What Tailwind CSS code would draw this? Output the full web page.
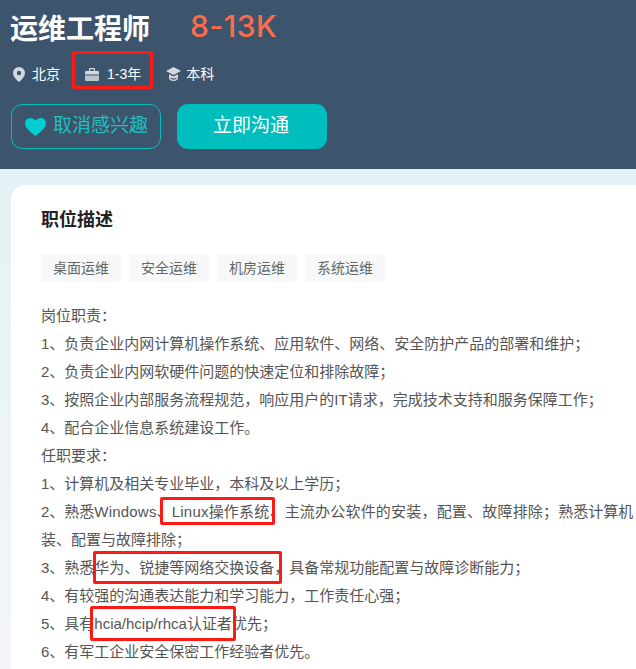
<!DOCTYPE html>
<html lang="zh-CN">
<head>
  <meta charset="UTF-8">
  <title>运维工程师</title>
  <script src="https://cdn.jsdelivr.net/npm/@tailwindcss/browser@4"></script>
</head>
<body class="relative h-[669px] overflow-hidden bg-white font-['Liberation_Sans','Noto_Sans_CJK_SC',sans-serif]">

  <!-- header -->
  <div class="h-[169px] bg-[#3c556d] pl-[11px] pt-[8px]">
    <div class="flex h-[44px] items-center">
      <h1 class="-ml-[1px] w-[180px] text-[28px] font-bold text-white">运维工程师</h1>
      <span class="-mt-[8px] font-['Inter'] text-[30px] font-medium tracking-[0.5px] text-[#fc6c4c]">8-13K</span>
    </div>
    <div class="mt-[2px] flex h-[40px] items-center pl-[2px] text-[14px] text-white">
      <svg class="h-[15px] w-[12px]" viewBox="0 0 12 15" fill="#d3d9df"><path fill-rule="evenodd" d="M6 0a6 6 0 0 1 6 6c0 3.500-3.500 7-6 9-2.500-2-6-5.500-6-9a6 6 0 0 1 6-6zm0 3.800a2.200 2.200 0 1 0 0 4.400 2.200 2.200 0 0 0 0-4.400z"/></svg>
      <span class="ml-[7px]">北京</span>
      <svg class="ml-[25px] h-[13px] w-[14px]" viewBox="0 0 14 13" fill="#d3d9df"><path fill-rule="evenodd" d="M4 3V1.200C4 .5 4.500 0 5.200 0h3.600C9.500 0 10 .5 10 1.200V3H5.200V1.200h3.600V3H4z"/><path d="M1.200 3h11.600c.7 0 1.200.5 1.200 1.200V6.500H0V4.200C0 3.500.5 3 1.200 3z"/><path opacity=".85" d="M0 7.500h14v4.300c0 .7-.5 1.200-1.200 1.200H1.200C.5 13 0 12.500 0 11.800z"/></svg>
      <span class="ml-[8px]">1-3年</span>
      <svg class="ml-[25px] h-[14px] w-[15px]" viewBox="0 0 15 14" fill="#d3d9df"><path d="M7.500 0 15 4 7.500 8 0 4z"/><path fill-rule="evenodd" d="M3 7.200 7.500 9.500 12 7.200V11c0 1.700-2 3-4.500 3S3 12.700 3 11V7.200zm1.200 3.300c0 1 1.400 2.200 3.300 2.200s3.300-1.200 3.300-2.200c-1 .6-2.100.9-3.300.9s-2.300-.3-3.300-.9z"/></svg>
      <span class="ml-[5px]">本科</span>
    </div>
    <div class="mt-[10px] flex gap-[16px] text-[19px]">
      <button class="flex h-[45px] w-[150px] items-center rounded-[11px] border border-[#00bebd] pl-[13px] text-[#1fbfc0]">
        <svg class="h-[18px] w-[21px]" viewBox="0 0 21 18" fill="#00ced0"><path d="M10.500 18C4 13 0 9.500 0 5.300 0 2.300 2.300 0 5.300 0c2 0 3.900 1 5.200 2.800C11.800 1 13.700 0 15.700 0 18.700 0 21 2.300 21 5.300 21 9.500 17 13 10.500 18z"/></svg>
        <span class="ml-[7px]">取消感兴趣</span>
      </button>
      <button class="h-[45px] w-[150px] rounded-[11px] bg-[#00bebd] pr-[2px] text-white">立即沟通</button>
    </div>
  </div>

  <!-- content -->
  <div class="h-[500px] bg-linear-to-b from-[#e3f2f6] to-[#f3f5fa] pl-[11px] pt-[16px]">
    <div class="h-[484px] w-[700px] rounded-tl-[14px] bg-white pl-[30px] pt-[23px]">
      <h2 class="h-[24px] text-[18px] leading-[24px] font-bold text-[#222]">职位描述</h2>
      <div class="mt-[22px] flex gap-[8px] text-[14px] text-[#666]">
        <span class="flex h-[28px] w-[80px] items-center justify-center rounded-[4px] bg-[#f8f8f8]">桌面运维</span>
        <span class="flex h-[28px] w-[80px] items-center justify-center rounded-[4px] bg-[#f8f8f8]">安全运维</span>
        <span class="flex h-[28px] w-[80px] items-center justify-center rounded-[4px] bg-[#f8f8f8]">机房运维</span>
        <span class="flex h-[28px] w-[80px] items-center justify-center rounded-[4px] bg-[#f8f8f8]">系统运维</span>
      </div>
      <div class="mt-[20px] whitespace-nowrap text-[15px] leading-[28px] text-[#555]">
        <p>岗位职责：</p>
        <p>1、负责企业内网计算机操作系统、应用软件、网络、安全防护产品的部署和维护；</p>
        <p>2、负责企业内网软硬件问题的快速定位和排除故障；</p>
        <p>3、按照企业内部服务流程规范，响应用户的IT请求，完成技术支持和服务保障工作；</p>
        <p>4、配合企业信息系统建设工作。</p>
        <p>任职要求：</p>
        <p>1、计算机及相关专业毕业，本科及以上学历；</p>
        <p>2、熟悉<span class="tracking-[0.2px]">Windows、Linux操作系统、主流办公软件的安装，配置、故障排除；</span>熟悉计算机</p>
        <p>装、配置与故障排除；</p>
        <p>3、熟悉华为、锐捷等网络交换设备，具备常规功能配置与故障诊断能力；</p>
        <p>4、有较强的沟通表达能力和学习能力，工作责任心强；</p>
        <p>5、具有hcia/hcip/rhca认证者优先；</p>
        <p>6、有军工企业安全保密工作经验者优先。</p>
      </div>
    </div>
  </div>

  <!-- red annotation boxes drawn over the screenshot -->
  <div class="absolute left-[72px] top-[51px] h-[38px] w-[81px] rounded-[2px] border-[3px] border-[#fb1a14]"></div>
  <div class="absolute left-[160px] top-[497px] h-[28px] w-[115px] rounded-[2px] border-[3px] border-[#fb1a14]"></div>
  <div class="absolute left-[93px] top-[551px] h-[33px] w-[189px] rounded-[2px] border-[3px] border-[#fb1a14]"></div>
  <div class="absolute left-[90px] top-[606px] h-[35px] w-[146px] rounded-[2px] border-[3px] border-[#fb1a14]"></div>

</body>
</html>
